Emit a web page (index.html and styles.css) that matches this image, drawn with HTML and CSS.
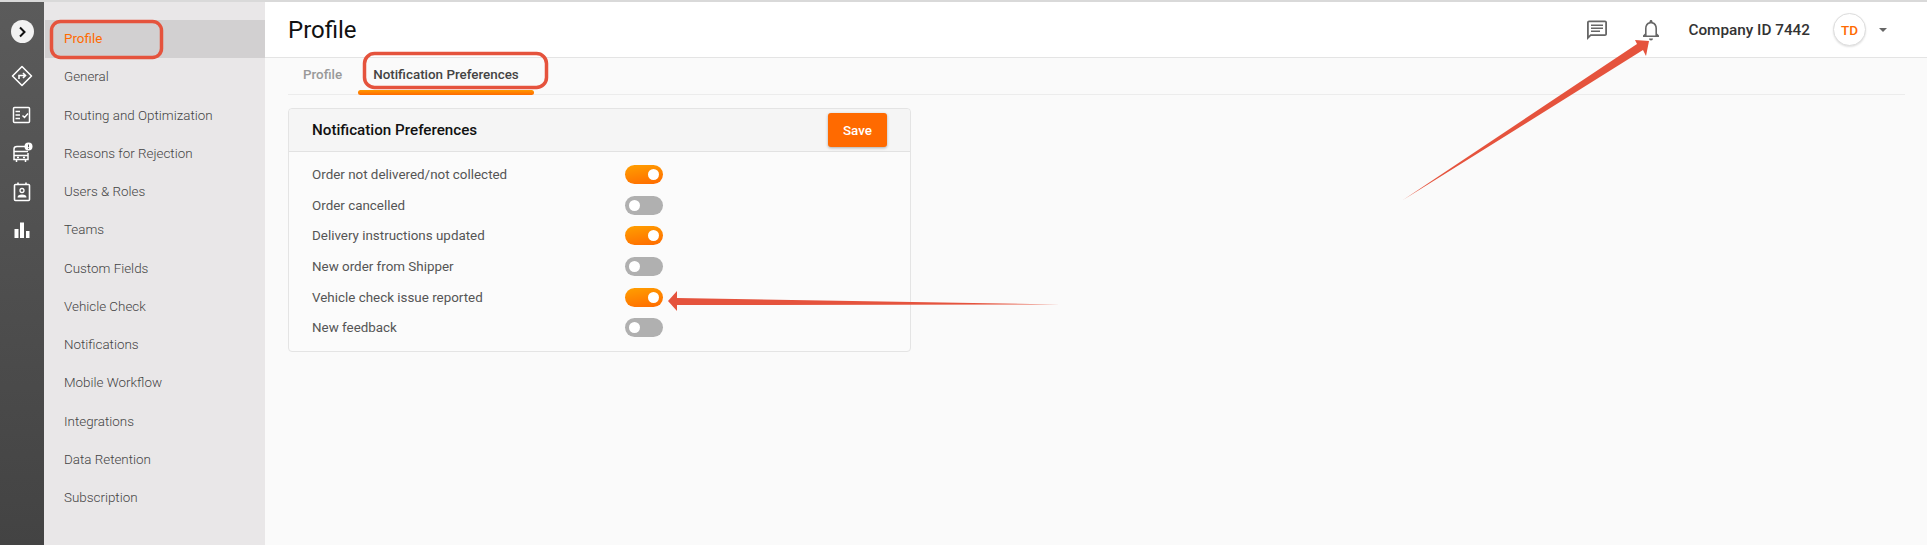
FILE: index.html
```html
<!DOCTYPE html>
<html>
<head>
    <link rel="stylesheet" href="styles.css">
</head>
<body>
<div class="page">
    <div class="rail">
        <div class="rail-toggle">
            <svg width="14" height="14" viewBox="0 0 14 14"><path d="M5 2.5 L9.5 7 L5 11.5" fill="none" stroke="#111" stroke-width="2"/></svg>
        </div>
        <svg class="rail-icon rail-route" width="22" height="22" viewBox="0 0 22 22" fill="none" stroke="#fff" stroke-width="1.6">
            <path d="M11 1.5 L20.5 11 L11 20.5 L1.5 11 Z" stroke-linejoin="round"/>
            <path d="M8 14 V10.5 H14 M12 8 L14.5 10.5 L12 13"/>
        </svg>
        <svg class="rail-icon" width="22" height="22" viewBox="0 0 22 22" fill="none" stroke="#fff" stroke-width="1.5">
            <rect x="2.5" y="3.5" width="16" height="15" rx="1"/>
            <path d="M4.5 7.5 H9 M4.5 11 H9 M4.5 14.5 H9 M11.5 11.5 L13.5 13.5 L17 9.5"/>
        </svg>
        <svg class="rail-icon" width="22" height="22" viewBox="0 0 22 22" fill="none" stroke="#fff" stroke-width="1.5">
            <path d="M14 4.5 H6 Q3 4.5 3 7 V17.5 H17 V11"/>
            <path d="M3 9.5 H17 M3 13.5 H17 M5.5 17.5 V20 M14.5 17.5 V20 M6 15.5 H8 M12 15.5 H14"/>
            <circle cx="17.5" cy="4.5" r="4" fill="#fff" stroke="none"/>
            <path d="M17.5 2.5 V5 M17.5 5.8 V6.8" stroke="#555" stroke-width="1"/>
        </svg>
        <svg class="rail-icon" width="22" height="22" viewBox="0 0 22 22" fill="none" stroke="#fff" stroke-width="1.6">
            <rect x="3.5" y="3.5" width="15" height="16" rx="1"/>
            <path d="M7 1.5 V4 M15 1.5 V4"/>
            <circle cx="11" cy="9.5" r="2" fill="none" stroke-width="1.3"/>
            <path d="M6.5 16.5 Q6.5 13.5 11 13.5 Q15.5 13.5 15.5 16.5 Z" fill="#fff" stroke="none"/>
        </svg>
        <svg class="rail-icon" width="22" height="22" viewBox="0 0 22 22" fill="#fff">
            <rect x="3.5" y="10" width="4" height="9"/>
            <rect x="9" y="3.5" width="4" height="15.5"/>
            <rect x="15" y="12" width="3.5" height="7"/>
        </svg>
    </div>

    <div class="side-nav">
        <div class="side-item active">Profile</div>
        <div class="side-item">General</div>
        <div class="side-item">Routing and Optimization</div>
        <div class="side-item">Reasons for Rejection</div>
        <div class="side-item">Users &amp; Roles</div>
        <div class="side-item">Teams</div>
        <div class="side-item">Custom Fields</div>
        <div class="side-item">Vehicle Check</div>
        <div class="side-item">Notifications</div>
        <div class="side-item">Mobile Workflow</div>
        <div class="side-item">Integrations</div>
        <div class="side-item">Data Retention</div>
        <div class="side-item">Subscription</div>
    </div>

    <div class="main">
        <div class="header">
            <h1>Profile</h1>
            <div class="header-right">
                <svg class="chat-icon" width="24" height="24" viewBox="0 0 24 24" fill="#666">
                    <path d="M20 2.5 H4 C3 2.5 2 3.4 2 4.5 V22 L6 18 H20 C21 18 22 17 22 16 V4.5 C22 3.4 21 2.5 20 2.5 Z M20.2 16.2 H5.4 L3.8 17.8 V4.3 H20.2 Z"/>
                    <path d="M6 6.5 H18 V8 H6 Z M6 9.5 H18 V11 H6 Z M6 12.5 H15 V14 H6 Z"/>
                </svg>
                <svg class="bell-icon" width="24" height="24" viewBox="0 0 24 24" fill="#666">
                    <path d="M12 22.5 C13.1 22.5 14 21.6 14 20.5 H10 C10 21.6 10.9 22.5 12 22.5 Z"/>
                    <path d="M18 15.5 V10.5 C18 7.2 16.5 4.7 13.5 4 V3.5 C13.5 2.7 12.8 2 12 2 C11.2 2 10.5 2.7 10.5 3.5 V4 C7.5 4.7 6 7.2 6 10.5 V15.5 L4 17.5 V19 H20 V17.5 Z M16.4 17.4 H7.6 V10.5 C7.6 7.6 9.3 5.4 12 5.4 C14.7 5.4 16.4 7.6 16.4 10.5 Z"/>
                </svg>
                <div class="company">Company ID 7442</div>
                <div class="avatar">TD</div>
                <div class="caret"></div>
            </div>
        </div>

        <div class="content">
            <div class="tabs">
                <div class="tab">Profile</div>
                <div class="tab tab-active">Notification Preferences</div>
            </div>

            <div class="card">
                <div class="card-header">
                    <div class="card-title">Notification Preferences</div>
                    <button class="save-button">Save</button>
                </div>
                <div class="card-body">
                    <div class="pref-row"><span class="pref-label">Order not delivered/not collected</span><span class="switch on"></span></div>
                    <div class="pref-row"><span class="pref-label">Order cancelled</span><span class="switch"></span></div>
                    <div class="pref-row"><span class="pref-label">Delivery instructions updated</span><span class="switch on"></span></div>
                    <div class="pref-row"><span class="pref-label">New order from Shipper</span><span class="switch"></span></div>
                    <div class="pref-row"><span class="pref-label">Vehicle check issue reported</span><span class="switch on"></span></div>
                    <div class="pref-row"><span class="pref-label">New feedback</span><span class="switch"></span></div>
                </div>
            </div>
        </div>
    </div>
</div>

<svg class="marks" width="1927" height="545" viewBox="0 0 1927 545">
    <rect x="51.5" y="21.5" width="110" height="36" rx="9" fill="none" stroke="#e5533d" stroke-width="3.5"/>
    <rect x="364.5" y="53.5" width="182" height="34" rx="10" fill="none" stroke="#e5533d" stroke-width="3.5"/>
    <path d="M668 301 L677 291 L677 298 L1060 304.5 L677 305 L677 311 Z" fill="#e5533d"/>
    <path d="M1649 41 L1646 56 L1643 50 L1403 200 L1637 44 L1635 40 Z" fill="#e5533d"/>
</svg>
</body>
</html>
```

FILE: styles.css
```css
* {
    box-sizing: border-box;
}

html, body {
    margin: 0;
    padding: 0;
    height: 100%;
    overflow: hidden;
}

body {
    font-family: Roboto, sans-serif;
    background-color: #fff;
    position: relative;
}

.page {
    display: flex;
    height: 545px;
    border-top: 2px solid #d9d9d9;
}

.rail {
    width: 44px;
    flex-shrink: 0;
    display: flex;
    flex-direction: column;
    align-items: center;
    padding-top: 18px;
    background: linear-gradient(to bottom, #5b5b5b, #434343);
}

.rail-toggle {
    width: 23px;
    height: 23px;
    border-radius: 50%;
    background-color: #f2f2f2;
    display: flex;
    align-items: center;
    justify-content: center;
    margin-bottom: 22px;
}

.rail-icon {
    display: block;
    margin-bottom: 16.3px;
}

.rail-route {
    margin-bottom: 17px;
}

.side-nav {
    width: 221px;
    flex-shrink: 0;
    padding-top: 18px;
    padding-left: 1px;
    background-color: #e9e7e8;
}

.side-item {
    height: 38.25px;
    line-height: 38px;
    padding-left: 19px;
    font-size: 13.4px;
    font-weight: 300;
    color: #444;
}

.side-item.active {
    background-color: #d2d0d1;
    color: #ff6a00;
    font-weight: 400;
}

.main {
    flex: 1;
    display: flex;
    flex-direction: column;
    min-width: 0;
}

.header {
    height: 56px;
    flex-shrink: 0;
    display: flex;
    align-items: center;
    justify-content: space-between;
    padding-left: 23px;
    background-color: #fff;
    border-bottom: 1px solid #e4e4e4;
}

.header h1 {
    margin: 0;
    font-size: 24px;
    font-weight: 400;
    color: #111;
}

.header-right {
    display: flex;
    align-items: center;
    padding-right: 40px;
}

.chat-icon {
    margin-right: 30px;
}

.bell-icon {
    margin-right: 25px;
}

.company {
    font-size: 15.3px;
    font-weight: 500;
    color: #333;
    margin-right: 23px;
}

.avatar {
    width: 33px;
    height: 33px;
    border-radius: 50%;
    border: 1px solid #ddd;
    background-color: #fff;
    box-shadow: 0 1px 2px rgba(0, 0, 0, 0.12);
    color: #ff6a00;
    font-size: 13.5px;
    font-weight: 500;
    display: flex;
    align-items: center;
    justify-content: center;
    margin-right: 13px;
}

.caret {
    width: 0;
    height: 0;
    border-left: 4px solid transparent;
    border-right: 4px solid transparent;
    border-top: 4px solid #666;
}

.content {
    flex: 1;
    padding: 0 22px 0 23px;
    background-color: #fafafa;
}

.tabs {
    display: flex;
    height: 37px;
    padding-left: 15px;
    border-bottom: 1px solid #ececec;
    margin-bottom: 13px;
}

.tab {
    position: relative;
    font-size: 13.4px;
    font-weight: 500;
    color: #999;
    line-height: 33px;
    margin-right: 31px;
}

.tab-active {
    color: #444;
}

.tab-active::after {
    content: "";
    position: absolute;
    left: -15px;
    right: -15px;
    bottom: -1px;
    height: 5px;
    border-radius: 3px;
    background: linear-gradient(to bottom, #ff9800, #ff6a00);
}

.card {
    width: 623px;
    height: 244px;
    border: 1px solid #e4e4e4;
    border-radius: 4px;
    background-color: #fbfbfb;
}

.card-header {
    height: 43px;
    display: flex;
    align-items: center;
    justify-content: space-between;
    padding: 0 23px;
    background-color: #f5f5f5;
    border-bottom: 1px solid #e2e2e2;
    border-radius: 4px 4px 0 0;
}

.card-title {
    font-size: 15.2px;
    font-weight: 500;
    color: #111;
}

.save-button {
    width: 59px;
    height: 34px;
    border: none;
    border-radius: 3px;
    background-color: #ff6a00;
    color: #fff;
    font-family: Roboto, sans-serif;
    font-size: 13.4px;
    font-weight: 500;
    box-shadow: 0 1px 3px rgba(0, 0, 0, 0.3);
}

.card-body {
    padding-top: 7px;
}

.pref-row {
    display: flex;
    align-items: center;
    height: 30.7px;
    padding-left: 23px;
}

.pref-label {
    width: 313px;
    font-size: 13.4px;
    color: #555;
}

.switch {
    position: relative;
    display: block;
    width: 38px;
    height: 19px;
    border-radius: 10px;
    background-color: #b0b0b0;
}

.switch::after {
    content: "";
    position: absolute;
    top: 4px;
    left: 4px;
    width: 11px;
    height: 11px;
    border-radius: 50%;
    background-color: #fff;
}

.switch.on {
    background: linear-gradient(170deg, #ffa000, #ff6a00);
}

.switch.on::after {
    left: 23px;
}

.marks {
    position: absolute;
    top: 0;
    left: 0;
    pointer-events: none;
}
```
